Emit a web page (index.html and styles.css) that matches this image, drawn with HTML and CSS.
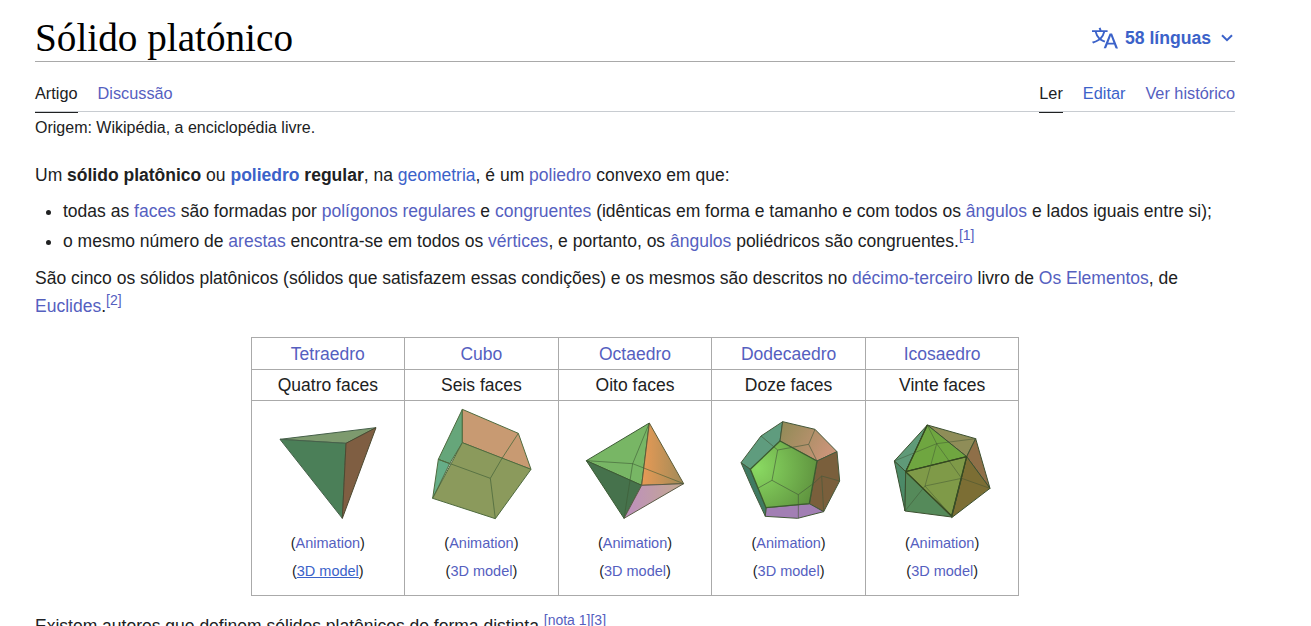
FILE: index.html
```html
<!DOCTYPE html>
<html lang="pt">
<head>
<meta charset="utf-8">
<title>Sólido platónico</title>
<link rel="stylesheet" href="styles.css">
</head>
<body>
<main class="page">
  <header class="title-bar">
    <h1 class="title">Sólido platónico</h1>
    <button class="lang">
      <svg class="lang-icon" viewBox="0 0 20 20"><path fill="currentColor" d="M20 18h-1.44a.6.6 0 0 1-.4-.12.8.8 0 0 1-.23-.31L17 15h-5l-1 2.54a.8.8 0 0 1-.22.3.6.6 0 0 1-.4.14H9l4.55-11.47h1.89zm-3.53-4.31L14.89 9.5a12 12 0 0 1-.39-1.24q-.09.37-.19.69l-.19.56-1.58 4.19zm-6.3-1.58a13.4 13.4 0 0 1-2.91-1.41 11.46 11.46 0 0 0 2.81-5.37H12V4H7.31a4 4 0 0 0-.2-.56C6.87 2.79 6.6 2 6.6 2l-1.47.5s.4.89.6 1.5H0v1.33h2.15A11.23 11.23 0 0 0 5 10.7a17.2 17.2 0 0 1-5 2.1q.56.82.87 1.38a23.3 23.3 0 0 0 5.22-2.51 15.6 15.6 0 0 0 3.56 1.77zM3.63 5.33h4.91a8.1 8.1 0 0 1-2.45 4.45 9.1 9.1 0 0 1-2.46-4.45"/></svg>
      <span>58 línguas</span>
      <svg class="chev" viewBox="0 0 12 8"><path d="M1 1.2 6 6.2 11 1.2" fill="none" stroke="currentColor" stroke-width="2"/></svg>
    </button>
  </header>
  <nav class="tabs">
    <div class="tab-group">
      <a class="tab active">Artigo</a>
      <a class="tab v">Discussão</a>
    </div>
    <div class="tab-group">
      <a class="tab active">Ler</a>
      <a class="tab">Editar</a>
      <a class="tab v">Ver histórico</a>
    </div>
  </nav>
  <div class="origin">Origem: Wikipédia, a enciclopédia livre.</div>
  <p class="lead">Um <b>sólido platônico</b> ou <a href="#"><b>poliedro</b></a> <b>regular</b>, na <a href="#">geometria</a>, é um <a class="v" href="#">poliedro</a> convexo em que:</p>
  <ul class="list">
    <li>todas as <a class="v" href="#">faces</a> são formadas por <a class="v" href="#">polígonos regulares</a> e <a class="v" href="#">congruentes</a> (idênticas em forma e tamanho e com todos os <a class="v" href="#">ângulos</a> e lados iguais entre si);</li>
    <li>o mesmo número de <a class="v" href="#">arestas</a> encontra-se em todos os <a class="v" href="#">vértices</a>, e portanto, os <a class="v" href="#">ângulos</a> poliédricos são congruentes.<sup><a class="v" href="#">[1]</a></sup></li>
  </ul>
  <p class="para">São cinco os sólidos platônicos (sólidos que satisfazem essas condições) e os mesmos são descritos no <a class="v" href="#">décimo-terceiro</a> livro de <a class="v" href="#">Os Elementos</a>, de <a class="v" href="#">Euclides</a>.<sup><a class="v" href="#">[2]</a></sup></p>
  <table class="solids">
    <tr class="names">
      <td><a class="v" href="#">Tetraedro</a></td>
      <td><a class="v" href="#">Cubo</a></td>
      <td><a class="v" href="#">Octaedro</a></td>
      <td><a class="v" href="#">Dodecaedro</a></td>
      <td><a class="v" href="#">Icosaedro</a></td>
    </tr>
    <tr class="faces">
      <td>Quatro faces</td><td>Seis faces</td><td>Oito faces</td><td>Doze faces</td><td>Vinte faces</td>
    </tr>
    <tr class="shapes">
      <td>
        <svg class="solid" viewBox="54 15 360 360">
          <defs>
            <linearGradient id="oct" x1="0" y1="0" x2="1" y2="0"><stop offset="0" stop-color="#e89a55"/><stop offset="1" stop-color="#a08a58"/></linearGradient>
            <linearGradient id="pk" x1="0" y1="0" x2="1" y2="0"><stop offset="0" stop-color="#bd8fc0"/><stop offset="1" stop-color="#c4a98e"/></linearGradient>
            <radialGradient id="dod" cx="0.1" cy="0.4" r="1"><stop offset="0" stop-color="#8ada62"/><stop offset="1" stop-color="#5c8e3c"/></radialGradient>
            <linearGradient id="dtop" x1="0" y1="0" x2="1" y2="0.4"><stop offset="0" stop-color="#8f8a55"/><stop offset="1" stop-color="#c99478"/></linearGradient>
          </defs>
          <g stroke="#46604a" stroke-width="3" stroke-linejoin="round">
            <path fill="#7d9a6e" d="M90 115 378 80 288 127Z"/>
            <path fill="#4b7f58" d="M90 115 288 127 277 352Z"/>
            <path fill="#7f5e42" stroke="#4d4a32" d="M288 127 378 80 277 352Z"/>
          </g>
        </svg>
        <div class="meta">(<a class="v" href="#">Animation</a>)</div>
        <div class="meta">(<a class="u" href="#">3D model</a>)</div>
      </td>
      <td>
        <svg class="solid" viewBox="514 15 360 360">
          <g stroke="#4f6b3f" stroke-width="3" stroke-linejoin="round">
            <path fill="#66a67a" d="M638 25 638 125 600 188 566 175Z"/>
            <path fill="#66ae88" d="M566 175 600 188 549 292Z"/>
            <path fill="#c89a72" d="M638 25 806 97 844 205 757 172 638 125Z"/>
            <path fill="#8b9a5c" d="M638 125 844 205 737 353 549 292Z"/>
            <path fill="none" stroke-width="2.5" d="M566 175 722 232M757 172 722 232 737 353M806 97 757 172"/>
          </g>
        </svg>
        <div class="meta">(<a class="v" href="#">Animation</a>)</div>
        <div class="meta">(<a class="v" href="#">3D model</a>)</div>
      </td>
      <td>
        <svg class="solid" viewBox="45 15 360 360">
          <g stroke="#3c5a34" stroke-width="3" stroke-linejoin="round">
            <path fill="#78b665" d="M268 66 79 179 245 253Z"/>
            <path fill="url(#oct)" stroke="#5c5c38" d="M268 66 245 253 371 248Z"/>
            <path fill="#46724c" d="M79 179 245 253 192 352Z"/>
            <path fill="url(#pk)" stroke="#5c5c48" d="M245 253 371 248 192 352Z"/>
            <path fill="none" stroke-width="2.5" stroke-opacity=".7" d="M79 179 218 188 268 66M218 188 371 248M218 188 192 352"/>
          </g>
        </svg>
        <div class="meta">(<a class="v" href="#">Animation</a>)</div>
        <div class="meta">(<a class="v" href="#">3D model</a>)</div>
      </td>
      <td>
        <svg class="solid" viewBox="54 15 360 360">
          <g stroke="#44583a" stroke-width="3" stroke-linejoin="round">
            <path fill="#5f9c7e" d="M215 62 207 120 118 205 90 185 150 105Z"/>
            <path fill="url(#dtop)" d="M215 62 312 85 378 152 318 180 207 120Z"/>
            <path fill="#7a5f3c" d="M378 152 386 240 338 332 295 308 318 180Z"/>
            <path fill="#a27fb4" d="M165 320 295 308 338 332 260 352 163 346Z"/>
            <path fill="#3f7a62" d="M90 185 118 205 165 320 163 346 125 265Z"/>
            <path fill="url(#dod)" stroke="#3c5c30" stroke-width="4" d="M207 120 318 180 295 308 165 320 118 205Z"/>
            <path fill="none" stroke-width="2.5" stroke-opacity=".75" d="M150 105 200 147 293 130 312 85M293 130 318 180M200 147 183 238 262 281 308 247 332 225 386 240M332 225 338 332M183 238 140 262M262 281 262 352"/>
          </g>
        </svg>
        <div class="meta">(<a class="v" href="#">Animation</a>)</div>
        <div class="meta">(<a class="v" href="#">3D model</a>)</div>
      </td>
      <td>
        <svg class="solid" viewBox="516 15 360 360">
          <g stroke="#3c5030" stroke-width="3" stroke-linejoin="round">
            <path fill="#5f9a78" d="M553 180 652 72 587 212Z"/>
            <path fill="#4c8a68" d="M553 180 587 212 585 330Z"/>
            <path fill="#8f8d58" d="M652 72 797 113 770 167Z"/>
            <path fill="#8f6f48" d="M797 113 840 262 770 167Z"/>
            <path fill="#7c6e34" d="M770 167 840 262 725 350Z"/>
            <path fill="#558a5a" d="M587 212 725 348 585 330Z"/>
            <path fill="#6fa640" d="M652 72 587 212 770 167Z"/>
            <path fill="#7f9a48" d="M587 212 770 167 725 345Z"/>
            <path fill="none" stroke="#35491f" stroke-width="4" d="M652 72 587 212 770 167 725 345 587 212"/>
            <path fill="none" stroke-width="2.5" stroke-opacity=".55" d="M553 180 680 128 652 72M680 128 797 113M680 128 755 232 840 262M755 232 725 345M680 128 645 255 585 330M645 255 755 232M645 255 725 345"/>
          </g>
        </svg>
        <div class="meta">(<a class="v" href="#">Animation</a>)</div>
        <div class="meta">(<a class="v" href="#">3D model</a>)</div>
      </td>
    </tr>
  </table>
  <p class="para cut">Existem autores que definem sólidos platônicos de forma distinta.<sup><a class="v" href="#">[nota 1]</a><a class="v" href="#">[3]</a></sup></p>
</main>
</body>
</html>
```
FILE: styles.css
```css
* { box-sizing: border-box; }
html, body { margin: 0; height: 626px; overflow: hidden; background: #fff; }
body { font-family: "Liberation Sans", Arial, sans-serif; font-size: 17.5px; color: #202122; }
a { color: #3b62c9; text-decoration: none; }
a.v { color: #5560bf; }
a.u { color: #3b62c9; text-decoration: underline; }
.page { width: 1200px; margin-left: 35px; }

.title-bar { display: flex; justify-content: space-between; align-items: flex-end; height: 62px; border-bottom: 1px solid #a9a9a9; }
.title { margin: 0; font-family: "Liberation Serif", Georgia, serif; font-weight: 400; font-size: 39.2px; line-height: 46px; color: #000; }
.lang { display: flex; align-items: center; height: 26px; margin: 0 2px 10px 0; padding: 0; border: 0; background: none; color: #3b62c9; font: 700 17.6px "Liberation Sans", Arial, sans-serif; }
.lang-icon { width: 26px; height: 26px; margin-right: 7px; }
.chev { width: 12px; height: 8px; margin-left: 10px; }

.tabs { display: flex; justify-content: space-between; height: 50px; border-bottom: 1px solid #c8ccd1; font-size: 16.3px; }
.tab-group { display: flex; gap: 20px; }
.tab { display: block; height: 51px; padding-top: 22px; line-height: 19px; color: #3b62c9; }
.tab.v { color: #5560bf; }
.tab.active { color: #202122; border-bottom: 1px solid #202122; }

.origin { font-size: 16px; line-height: 16px; margin-top: 8px; }
.lead { margin: 27px 0 0; line-height: 24px; }
.list { margin: 12px 0 0; padding: 0 0 0 28px; line-height: 24px; }
.list li { margin-bottom: 6px; }
.para { margin: 11px 0 0; line-height: 28px; }
sup { font-size: 14px; line-height: 0; }

.solids { margin: 17px auto 0; border-collapse: collapse; table-layout: fixed; width: 768px; text-align: center; }
.solids td { border: 1px solid #aaa; padding: 0; width: 153.6px; }
.names td { height: 32px; padding-top: 1px; }
.faces td { height: 31px; padding-top: 1px; }
.shapes td { height: 195px; vertical-align: top; padding-top: 5px; }
.solid { display: block; width: 120px; height: 120px; margin: 0 auto 3px; filter: blur(0.3px); }
.meta { font-size: 14.5px; line-height: 28px; }
.cut { margin-top: 16px; }
```
